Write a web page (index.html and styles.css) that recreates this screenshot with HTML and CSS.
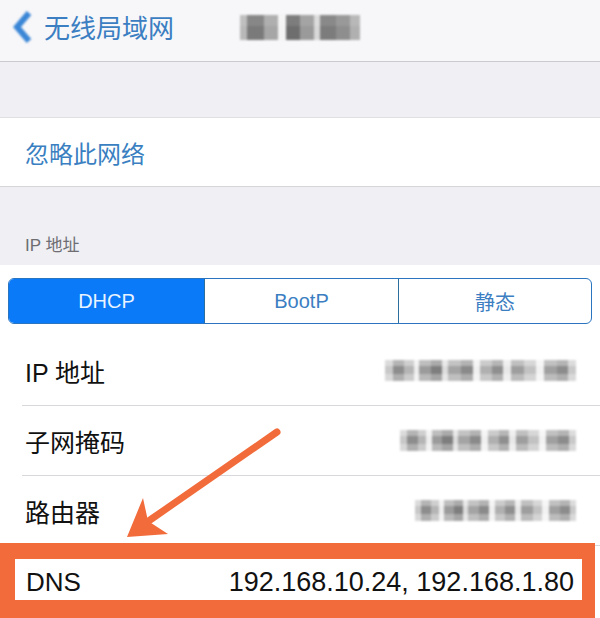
FILE: index.html
```html
<!DOCTYPE html>
<html lang="zh">
<head>
<meta charset="utf-8">
<title>无线局域网</title>
<link rel="stylesheet" href="styles.css">
</head>
<body>
<div class="screen">
  <header class="nav">
    <svg class="back" width="22" height="36" viewBox="0 0 22 36">
      <polyline points="18,4 6,18 18,32" fill="none" stroke="#3a86d6" stroke-width="6" stroke-linejoin="miter"/>
    </svg>
    <span class="nav-back">无线局域网</span>
    <span class="mosaic mosaic-title"></span>
  </header>

  <div class="spacer"></div>

  <div class="group">
    <div class="action">忽略此网络</div>
  </div>

  <div class="section-label">IP 地址</div>

  <div class="panel">
    <div class="segmented">
      <div class="seg seg-on">DHCP</div>
      <div class="seg">BootP</div>
      <div class="seg seg-cjk">静态</div>
    </div>

    <div class="rows">
      <div class="row">
        <span class="label">IP 地址</span>
        <span class="mosaic mosaic-ip"></span>
      </div>
      <div class="row">
        <span class="label">子网掩码</span>
        <span class="mosaic mosaic-mask"></span>
      </div>
      <div class="row">
        <span class="label">路由器</span>
        <span class="mosaic mosaic-router"></span>
      </div>
      <div class="row row-dns">
        <span class="label">DNS</span>
        <span class="value">192.168.10.24, 192.168.1.80</span>
      </div>
    </div>
  </div>

  <div class="highlight"></div>

  <svg class="arrow" width="600" height="618" viewBox="0 0 600 618">
    <line x1="277" y1="432" x2="150" y2="520" stroke="#f26b3b" stroke-width="7" stroke-linecap="round"/>
    <polygon points="127,537 143,498 148,521 168,534" fill="#f26b3b"/>
  </svg>
</div>
</body>
</html>
```

FILE: styles.css
```css
* { box-sizing: border-box; }

html, body {
  margin: 0;
  padding: 0;
}

body {
  width: 600px;
  height: 618px;
  overflow: hidden;
  background: #efeff4;
  font-family: "Liberation Sans", "Noto Sans CJK SC", sans-serif;
}

.screen {
  position: relative;
  width: 600px;
  height: 618px;
  overflow: hidden;
}

.nav {
  height: 62px;
  background: #f7f7f9;
  border-bottom: 1px solid #c9c9ce;
  display: flex;
  align-items: center;
  padding-left: 11px;
  padding-bottom: 8px;
}

.back {
  display: block;
  filter: blur(0.8px);
}

.nav-back {
  margin-left: 11px;
  font-family: "Noto Sans CJK SC", sans-serif;
  font-size: 26px;
  color: #3b7ec2;
  line-height: 30px;
}

.mosaic {
  display: block;
  height: 21px;
  filter: blur(1px);
  background:
    linear-gradient(180deg, rgba(255,255,255,0.35) 0 30%, rgba(0,0,0,0) 30% 65%, rgba(255,255,255,0.3) 65% 100%),
    linear-gradient(90deg,
      #c8c8c8 0 4%, #8d8d8d 4% 10%, #b5b5b5 10% 15%, #eeeeee 15% 18%,
      #9b9b9b 18% 24%, #7e7e7e 24% 30%, #dddddd 30% 33%, #a4a4a4 33% 40%,
      #8a8a8a 40% 46%, #f0f0f0 46% 50%, #b0b0b0 50% 56%, #8f8f8f 56% 62%,
      #e8e8e8 62% 66%, #9e9e9e 66% 73%, #c2c2c2 73% 79%, #f2f2f2 79% 83%,
      #a0a0a0 83% 90%, #8c8c8c 90% 96%, #c9c9c9 96% 100%);
}

.mosaic-title {
  margin-left: 66px;
  width: 120px;
  height: 25px;
  margin-top: 2px;
  background:
    linear-gradient(180deg, rgba(255,255,255,0.1) 0 45%, rgba(0,0,0,0) 45% 100%),
    linear-gradient(90deg,
      #b8b8b8 0 6%, #7a7a7a 6% 20%, #a6a6a6 20% 32%, #f4f4f4 32% 38%,
      #6e6e6e 38% 50%, #9a9a9a 50% 62%, #d8d8d8 62% 67%, #7c7c7c 67% 80%,
      #8e8e8e 80% 92%, #b0b0b0 92% 100%);
}

.spacer {
  height: 55px;
}

.group {
  background: #fff;
  border-top: 1px solid #e0e0e4;
  border-bottom: 1px solid #d6d6da;
}

.action {
  height: 68px;
  display: flex;
  align-items: center;
  padding-left: 25px;
  font-family: "Noto Sans CJK SC", sans-serif;
  font-size: 24px;
  color: #3a7fc1;
}

.section-label {
  height: 78px;
  display: flex;
  align-items: flex-end;
  padding-left: 25px;
  padding-bottom: 9px;
  font-size: 17px;
  color: #6d6d72;
  line-height: 20px;
}

.panel {
  background: #fff;
  padding: 13px 0 0 0;
  height: 353px;
}

.segmented {
  margin: 0 8px;
  height: 46px;
  display: grid;
  grid-template-columns: 195px 194px 1fr;
  border: 1.5px solid #2a74c0;
  border-radius: 6px;
  overflow: hidden;
}

.seg {
  display: flex;
  align-items: center;
  justify-content: center;
  font-size: 20px;
  color: #3b7ec2;
  border-left: 1.5px solid #2c6e9e;
}

.seg-on {
  background: #0a7af8;
  color: #e8f3ff;
  border-left: none;
}

.seg-cjk {
  font-family: "Noto Sans CJK SC", sans-serif;
}

.rows {
  margin-top: 12px;
}

.row {
  height: 70px;
  margin-left: 22px;
  padding-left: 3px;
  padding-right: 24px;
  border-bottom: 1px solid #d8d8dc;
  display: flex;
  align-items: center;
  justify-content: space-between;
}

.label {
  font-size: 25px;
  color: #111;
  font-family: "Liberation Sans", "Noto Sans CJK SC", sans-serif;
}

.mosaic-ip { width: 191px; }
.mosaic-mask { width: 176px; }
.mosaic-router { width: 161px; }

.row-dns {
  border-bottom: none;
  padding-left: 4px;
  padding-right: 26px;
}

.row-dns .label {
  font-size: 26px;
  padding-top: 2px;
}

.value {
  font-size: 27px;
  color: #111;
  padding-top: 2px;
}

.highlight {
  position: absolute;
  left: 0;
  top: 543px;
  width: 595px;
  height: 75px;
  border-style: solid;
  border-color: #f26b3b;
  border-width: 16px 13px 18px 15px;
}

.arrow {
  position: absolute;
  left: 0;
  top: 0;
  pointer-events: none;
}
```
